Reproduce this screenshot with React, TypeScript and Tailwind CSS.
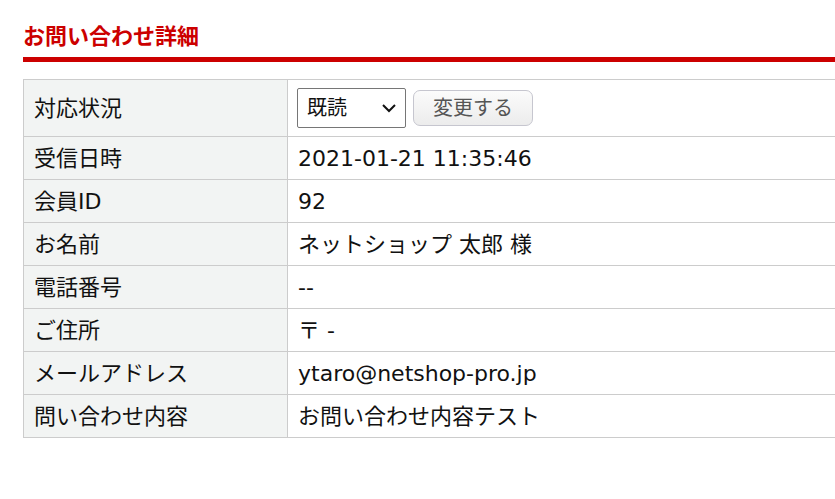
import React from "react";

const rows: { label: string; value: string }[] = [
  { label: "受信日時", value: "2021-01-21 11:35:46" },
  { label: "会員ID", value: "92" },
  { label: "お名前", value: "ネットショップ 太郎 様" },
  { label: "電話番号", value: "--" },
  { label: "ご住所", value: "〒 -" },
  { label: "メールアドレス", value: "ytaro@netshop-pro.jp" },
  { label: "問い合わせ内容", value: "お問い合わせ内容テスト" },
];

const font = { fontFamily: '"DejaVu Sans", "Noto Sans CJK JP", sans-serif' };

export default function App() {
  return (
    <div
      className="w-[835px] h-[499px] overflow-hidden bg-white pl-[23px] text-[22px] text-[#111]"
      style={font}
    >
      <h1 className="pt-[19px] text-[22px] leading-[30px] font-bold text-[#cc0000]" style={{ fontFamily: '"Noto Sans CJK JP", sans-serif' }}>
        お問い合わせ詳細
      </h1>
      <div className="mt-[8px] h-[5px] bg-[#cc0000]" />
      <div className="mt-[17px] border-t border-l border-[#cccccc]">
        <div className="flex h-[57px] border-b border-[#cccccc]">
          <div className="w-[264px] shrink-0 bg-[#f2f4f3] border-r border-[#cccccc] pl-[10px] flex items-center">
            対応状況
          </div>
          <div className="flex items-center pl-[9px] gap-[7px]">
            <div className="w-[109px] h-[40px] border border-[#767676] rounded-[2px] bg-white flex items-center justify-between pl-[9px] pr-[8px] text-[20px]">
              <span>既読</span>
              <svg width="16" height="10" viewBox="0 0 16 10" fill="none">
                <path d="M2 2 L8 8 L14 2" stroke="#111" strokeWidth="2" />
              </svg>
            </div>
            <div className="w-[120px] h-[36px] rounded-[7px] border border-[#c6c6cf] bg-gradient-to-b from-[#fbfbfb] to-[#ececec] flex items-center justify-center text-[20px] text-[#555]">
              変更する
            </div>
          </div>
        </div>
        {rows.map((r) => (
          <div key={r.label} className="flex h-[43px] border-b border-[#cccccc]">
            <div className="w-[264px] shrink-0 bg-[#f2f4f3] border-r border-[#cccccc] pl-[10px] flex items-center">
              {r.label}
            </div>
            <div className="pl-[10px] flex items-center whitespace-nowrap">{r.value}</div>
          </div>
        ))}
      </div>
    </div>
  );
}
